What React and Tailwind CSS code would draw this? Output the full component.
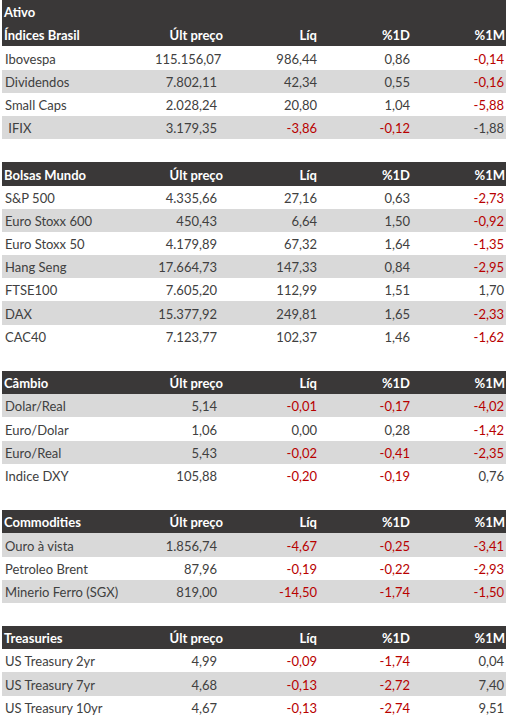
import React from "react";

const sections = [
  {
    title: "Índices Brasil",
    lead: "Ativo",
    grayOdd: true,
    rows: [
      ["Ibovespa", "115.156,07", "986,44", "0,86", "-0,14"],
      ["Dividendos", "7.802,11", "42,34", "0,55", "-0,16"],
      ["Small Caps", "2.028,24", "20,80", "1,04", "-5,88"],
      [" IFIX", "3.179,35", "-3,86", "-0,12", "-1,88", "plain"],
    ],
  },
  {
    title: "Bolsas Mundo",
    grayOdd: true,
    rows: [
      ["S&P 500", "4.335,66", "27,16", "0,63", "-2,73"],
      ["Euro Stoxx 600", "450,43", "6,64", "1,50", "-0,92"],
      ["Euro Stoxx 50", "4.179,89", "67,32", "1,64", "-1,35"],
      ["Hang Seng", "17.664,73", "147,33", "0,84", "-2,95"],
      ["FTSE100", "7.605,20", "112,99", "1,51", "1,70"],
      ["DAX", "15.377,92", "249,81", "1,65", "-2,33"],
      ["CAC40", "7.123,77", "102,37", "1,46", "-1,62"],
    ],
  },
  {
    title: "Câmbio",
    grayOdd: false,
    rows: [
      ["Dolar/Real", "5,14", "-0,01", "-0,17", "-4,02"],
      ["Euro/Dolar", "1,06", "0,00", "0,28", "-1,42"],
      ["Euro/Real", "5,43", "-0,02", "-0,41", "-2,35"],
      ["Indice DXY", "105,88", "-0,20", "-0,19", "0,76"],
    ],
  },
  {
    title: "Commodities",
    grayOdd: false,
    rows: [
      ["Ouro à vista", "1.856,74", "-4,67", "-0,25", "-3,41"],
      ["Petroleo Brent", "87,96", "-0,19", "-0,22", "-2,93"],
      ["Minerio Ferro (SGX)", "819,00", "-14,50", "-1,74", "-1,50"],
    ],
  },
  {
    title: "Treasuries",
    grayOdd: true,
    rows: [
      ["US Treasury 2yr", "4,99", "-0,09", "-1,74", "0,04"],
      ["US Treasury 7yr", "4,68", "-0,13", "-2,72", "7,40"],
      ["US Treasury 10yr", "4,67", "-0,13", "-2,74", "9,51"],
    ],
  },
];

const row = "flex items-end h-[23.19px]";
const cell = "leading-[16px] pb-[3px] whitespace-pre";

function HeaderRow({ title }) {
  return (
    <div className={`${row} bg-[#3a3838] text-white font-bold`}>
      <div className={`${cell} w-[153px] pl-[2px]`}>{title}</div>
      <div className={`${cell} w-[70px] text-right pr-[2px]`}>Últ preço</div>
      <div className={`${cell} w-[94px] text-right pr-[2px]`}>Líq</div>
      <div className={`${cell} w-[93px] text-right pr-[2px]`}>%1D</div>
      <div className={`${cell} w-[94px] text-right pr-[1px]`}>%1M</div>
    </div>
  );
}

function Num({ value, plain, className }) {
  const red = value.startsWith("-") && !plain;
  return (
    <div className={`${cell} text-right ${red ? "text-[#b80000]" : "text-[#404040]"} ${className}`}>
      {value}
    </div>
  );
}

function DataRow({ data, gray }) {
  const [label, price, liq, d1, m1, flag] = data;
  return (
    <div className={`${row} ${gray ? "bg-[#d9d9d9]" : "bg-white"}`}>
      <div className={`${cell} w-[153px] pl-[3px] text-[#404040]`}>{label}</div>
      <Num value={price} className="w-[70px] pr-[8px]" />
      <Num value={liq} className="w-[94px] pr-[2px]" />
      <Num value={d1} className="w-[93px] pr-[2px]" />
      <Num value={m1} plain={flag === "plain"} className="w-[94px] pr-[2px]" />
    </div>
  );
}

export default function App() {
  return (
    <div className="w-[506px] h-[719px] overflow-hidden bg-white pl-[2px] font-['Lato',sans-serif] text-[13px]">
      {sections.map((s, si) => (
        <div key={s.title}>
          {si > 0 && <div className="h-[23.19px]" />}
          {s.lead && (
            <div className={`${row} bg-[#3a3838] text-white font-bold`}>
              <div className={`${cell} pl-[2px]`}>{s.lead}</div>
            </div>
          )}
          <HeaderRow title={s.title} />
          {s.rows.map((r, i) => (
            <DataRow key={r[0]} data={r} gray={s.grayOdd ? i % 2 === 1 : i % 2 === 0} />
          ))}
        </div>
      ))}
    </div>
  );
}
